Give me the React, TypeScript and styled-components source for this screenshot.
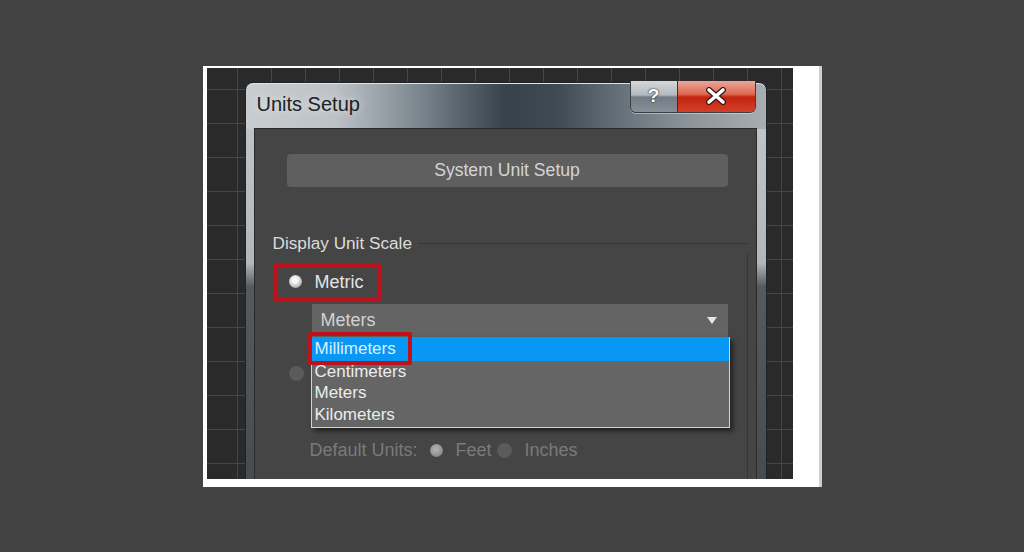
import styled, { createGlobalStyle } from 'styled-components';

const GlobalStyle = createGlobalStyle`
  html, body {
    margin: 0;
    padding: 0;
    background: #434343;
  }
  body {
    font-family: "Liberation Sans", Arial, sans-serif;
  }
`;

const Page = styled.div`
  height: 552px;
  display: flex;
  align-items: center;
  justify-content: center;
`;

const Frame = styled.div`
  box-sizing: border-box;
  width: 619px;
  height: 421px;
  background: #ffffff;
  padding: 2px 26px 8px 4px;
  border-right: 3px solid #cfcfcf;
`;

const Viewport = styled.div`
  box-sizing: border-box;
  width: 586px;
  height: 411px;
  overflow: hidden;
  padding: 14px 0 0 38px;
  background-color: #2a2a2a;
  background-image: linear-gradient(to right, #474747 1px, transparent 1px),
    linear-gradient(to bottom, #474747 1px, transparent 1px);
  background-size: 34px 34px;
  background-position: 30px 21px;
`;

const Window = styled.div`
  box-sizing: border-box;
  width: 522px;
  height: 430px;
  display: flex;
  flex-direction: column;
  border: 1px solid #1f2326;
  border-radius: 8px 8px 0 0;
  background: linear-gradient(
        90deg,
        #c9cdd0 0%,
        #bdc2c6 17%,
        #929ba2 28%,
        #5e6a73 40%,
        #37434c 50%,
        #3f4b54 60%,
        #66717a 72%,
        #8c949a 85%,
        #a8adb1 100%
      )
      top / 100% 46px no-repeat,
    linear-gradient(180deg, #c4c7ca 0px, #b3b7bb 180px, #565a5e 204px, #46494c 100%);
  box-shadow: inset 0 1px 0 #e2e4e6;
`;

const TitleBar = styled.div`
  height: 45px;
  display: flex;
  justify-content: space-between;
  align-items: flex-start;
  padding-left: 11px;
`;

const Title = styled.div`
  margin-top: 9px;
  font-size: 20px;
  line-height: 24px;
  color: #1c2125;
  text-shadow: 0 0 8px rgba(255, 255, 255, 0.7);
`;

const CaptionButtons = styled.div`
  display: flex;
  margin-top: -2px;
  margin-right: 10px;
  height: 31px;
  border: 1px solid #3a3f44;
  border-top: none;
  border-radius: 0 0 6px 6px;
  overflow: hidden;
  box-shadow: 0 1px 0 rgba(255, 255, 255, 0.4);
`;

const CaptionButton = styled.div<{ $kind: 'help' | 'close' }>`
  width: ${({ $kind }) => ($kind === 'help' ? '46px' : '77px')};
  display: flex;
  align-items: center;
  justify-content: center;
  border-left: ${({ $kind }) => ($kind === 'close' ? '1px solid #4a2a26' : 'none')};
  background: ${({ $kind }) =>
    $kind === 'help'
      ? 'linear-gradient(180deg, #d3d7da 0%, #b4babf 45%, #737b83 52%, #87909a 100%)'
      : 'linear-gradient(180deg, #eaa598 0%, #de6a55 42%, #c4240f 52%, #d3402a 100%)'};
  color: #ffffff;
  font-weight: bold;
  font-size: 19px;
  text-shadow: 0 0 2px #2a2a2a, 0 0 1px #2a2a2a;
`;

const Content = styled.div`
  flex: 1;
  margin: 0 9px 0 8px;
  background: #454545;
  border: 1px solid #2a2a2a;
  border-bottom: none;
  padding-top: 25px;
  display: flex;
  flex-direction: column;
`;

const SystemButton = styled.div`
  margin: 0 28px 0 32px;
  height: 33px;
  border-radius: 4px;
  background: #5f5f5f;
  color: #d4d4d4;
  font-size: 17.6px;
  display: flex;
  align-items: center;
  justify-content: center;
`;

const Group = styled.div`
  margin: 47px 8px 0 18px;
  display: flex;
  flex-direction: column;
`;

const GroupHead = styled.div`
  height: 20px;
  display: flex;
  align-items: center;
  gap: 6px;
`;

const GroupLabel = styled.span`
  color: #dcdcdc;
  font-size: 17.2px;
`;

const GroupRule = styled.div`
  flex: 1;
  height: 1px;
  margin-top: -1px;
  background: #363636;
`;

const GroupBody = styled.div`
  border-right: 1px solid #363636;
  padding-top: 9px;
  padding-bottom: 40px;
  display: flex;
  flex-direction: column;
  align-items: flex-start;
`;

const RedBox = styled.div`
  box-sizing: border-box;
  width: 108px;
  height: 38px;
  border: 4px solid #c0101c;
  border-radius: 2px;
  display: flex;
  align-items: center;
  gap: 13px;
  padding-left: 12px;
`;

const Radio = styled.span<{ $tone: 'on' | 'off' | 'dim' }>`
  flex: none;
  width: ${({ $tone }) => ($tone === 'off' ? '15px' : '13px')};
  height: ${({ $tone }) => ($tone === 'off' ? '15px' : '13px')};
  border-radius: 50%;
  background: ${({ $tone }) =>
    $tone === 'on'
      ? 'radial-gradient(circle at 45% 40%, #ffffff 0, #f0f0f0 30%, #a8a8a8 75%, #6e6e6e 100%)'
      : $tone === 'dim'
        ? 'radial-gradient(circle at 45% 40%, #b4b4b4 0, #9a9a9a 45%, #707070 100%)'
        : '#5b5b5b'};
`;

const MetricText = styled.span`
  color: #e4e4e4;
  font-size: 18px;
  margin-top: 2px;
`;

const Combo = styled.div`
  position: relative;
  align-self: stretch;
  margin: 3px 19px 0 39px;
`;

const ComboField = styled.div`
  height: 33px;
  background: #646464;
  color: #d2d2d2;
  font-size: 18px;
  display: flex;
  align-items: center;
  justify-content: space-between;
  padding: 0 11px 0 9px;
`;

const ComboList = styled.div`
  position: absolute;
  top: 100%;
  left: -1px;
  right: -2px;
  height: 90px;
  z-index: 2;
  background: #656565;
  border: 1px solid #d4d4d4;
  border-top: none;
  box-shadow: 3px 3px 5px rgba(0, 0, 0, 0.55);
`;

const ComboItem = styled.div<{ $selected?: boolean }>`
  position: relative;
  height: ${({ $selected }) => ($selected ? '24px' : '21.5px')};
  line-height: ${({ $selected }) => ($selected ? '24px' : '21.5px')};
  padding-left: 3px;
  font-size: 17px;
  color: ${({ $selected }) => ($selected ? '#dcefff' : '#ececec')};
  background: ${({ $selected }) => ($selected ? '#0897f4' : 'transparent')};
`;

const ItemMarker = styled.div`
  position: absolute;
  left: -4px;
  top: -5px;
  width: 104px;
  height: 33px;
  box-sizing: border-box;
  border: 4px solid #c0101c;
  border-radius: 2px;
`;

const RadioRow = styled.div<{ $indent: number; $top: number }>`
  display: flex;
  align-items: center;
  height: 20px;
  margin-top: ${({ $top }) => $top}px;
  padding-left: ${({ $indent }) => $indent}px;
`;

const DimLabel = styled.span<{ $gap?: number }>`
  color: #7a7a7a;
  font-size: 18px;
  margin-right: ${({ $gap }) => $gap ?? 0}px;
`;

const Option = styled.span`
  display: flex;
  align-items: center;
  gap: 13px;
  margin-right: 5px;
`;

function CloseGlyph() {
  return (
    <svg width="22" height="18" viewBox="0 0 22 18">
      <path d="M4 3 L18 15 M18 3 L4 15" stroke="#3a1410" strokeWidth="6" strokeLinecap="round" />
      <path d="M4 3 L18 15 M18 3 L4 15" stroke="#ffffff" strokeWidth="3.6" strokeLinecap="round" />
    </svg>
  );
}

function DownArrow() {
  return (
    <svg width="10" height="7" viewBox="0 0 10 7">
      <path d="M0 0 H10 L5 7 Z" fill="#e6e6e6" />
    </svg>
  );
}

const units = ['Millimeters', 'Centimeters', 'Meters', 'Kilometers'];

export default function App() {
  return (
    <>
      <GlobalStyle />
      <Page>
        <Frame>
          <Viewport>
            <Window>
              <TitleBar>
                <Title>Units Setup</Title>
                <CaptionButtons>
                  <CaptionButton $kind="help">?</CaptionButton>
                  <CaptionButton $kind="close">
                    <CloseGlyph />
                  </CaptionButton>
                </CaptionButtons>
              </TitleBar>
              <Content>
                <SystemButton>System Unit Setup</SystemButton>
                <Group>
                  <GroupHead>
                    <GroupLabel>Display Unit Scale</GroupLabel>
                    <GroupRule />
                  </GroupHead>
                  <GroupBody>
                    <RedBox>
                      <Radio $tone="on" />
                      <MetricText>Metric</MetricText>
                    </RedBox>
                    <Combo>
                      <ComboField>
                        <span>Meters</span>
                        <DownArrow />
                      </ComboField>
                      <ComboList>
                        {units.map((u, i) => (
                          <ComboItem key={u} $selected={i === 0}>
                            {u}
                            {i === 0 && <ItemMarker />}
                          </ComboItem>
                        ))}
                      </ComboList>
                    </Combo>
                    <RadioRow $indent={16} $top={27}>
                      <Radio $tone="off" />
                    </RadioRow>
                    <RadioRow $indent={37} $top={57}>
                      <DimLabel $gap={12}>Default Units:</DimLabel>
                      <Option>
                        <Radio $tone="dim" />
                        <DimLabel>Feet</DimLabel>
                      </Option>
                      <Option>
                        <Radio $tone="off" />
                        <DimLabel>Inches</DimLabel>
                      </Option>
                    </RadioRow>
                  </GroupBody>
                </Group>
              </Content>
            </Window>
          </Viewport>
        </Frame>
      </Page>
    </>
  );
}
